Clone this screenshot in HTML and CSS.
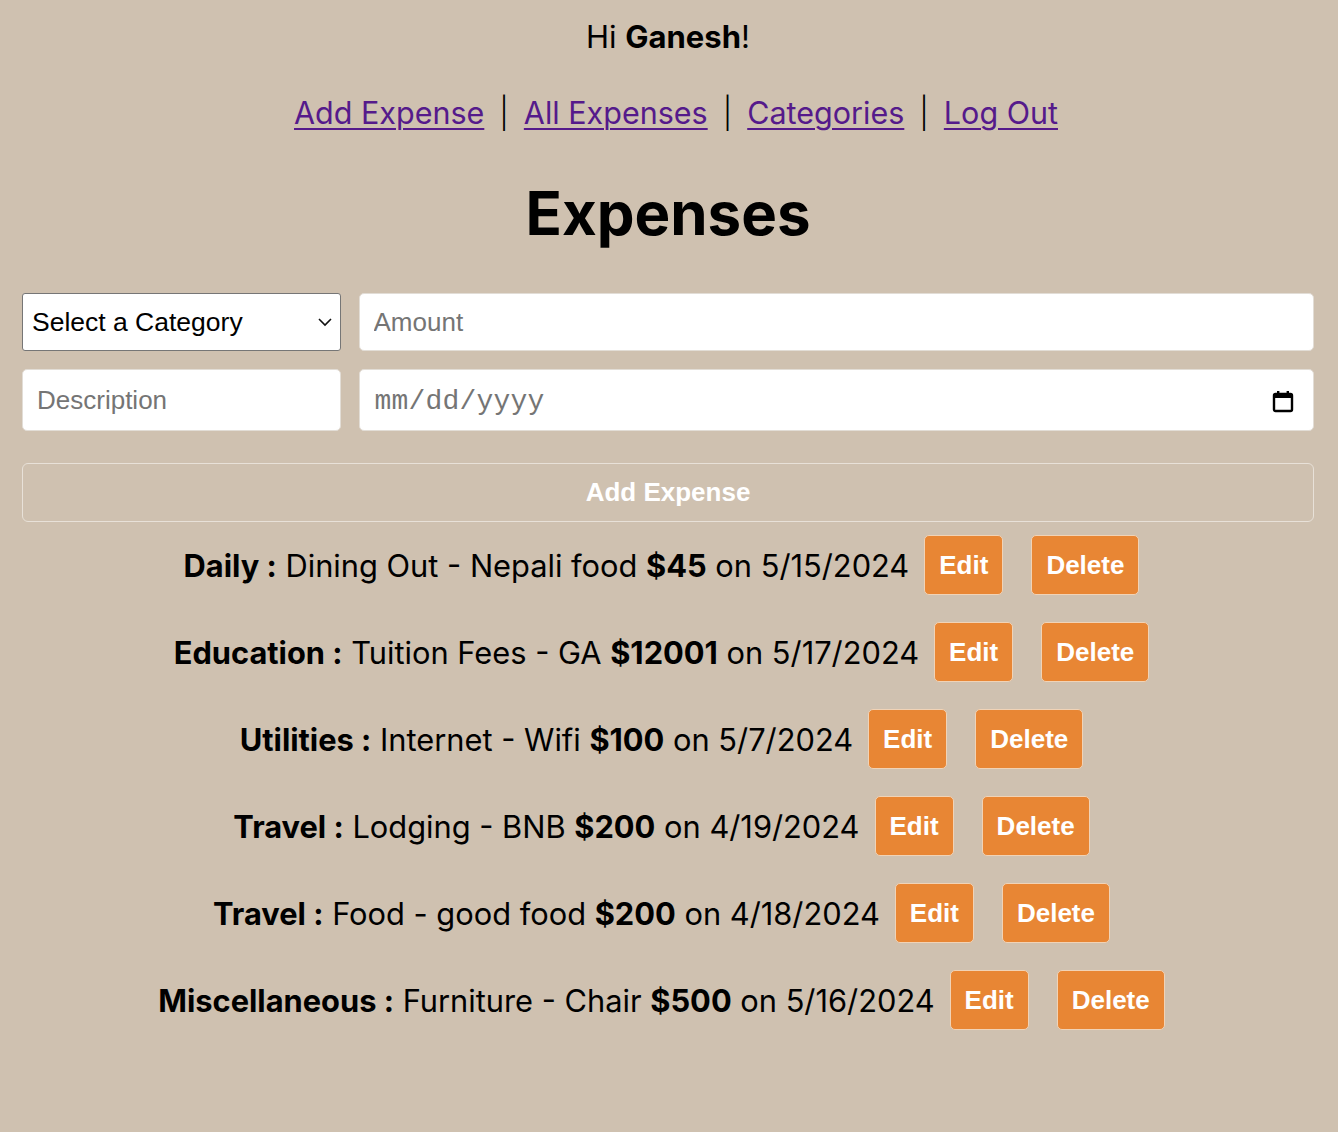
FILE: index.html
```html
<!DOCTYPE html>
<html lang="en">
<head>
<meta charset="utf-8">
<title>Expenses</title>
<link rel="stylesheet" href="styles.css">
</head>
<body>
<div class="page">
  <p class="greeting">Hi <b>Ganesh</b>!</p>
  <nav class="nav">
    <a href="#">Add Expense</a><span class="sep">|</span><a href="#">All Expenses</a><span class="sep">|</span><a href="#">Categories</a><span class="sep">|</span><a href="#">Log Out</a>
  </nav>
  <h1 class="title">Expenses</h1>
  <form class="form">
    <div class="select-wrap">
      <select class="select">
        <option>Select a Category</option>
      </select>
      <svg class="chev" width="16" height="10" viewBox="0 0 16 10"><path d="M2 2 L8 8 L14 2" fill="none" stroke="#111" stroke-width="1.6"/></svg>
    </div>
    <input class="field" type="text" placeholder="Amount">
    <input class="field tall" type="text" placeholder="Description">
    <div class="date-wrap">
      <span class="date-ph">mm/dd/yyyy</span>
      <svg class="cal" width="22" height="24" viewBox="0 0 22 24"><rect x="2" y="5" width="18" height="17" rx="1.5" fill="none" stroke="#000" stroke-width="2.4"/><rect x="2" y="5" width="18" height="4" fill="#000"/><rect x="5" y="2" width="2.4" height="4" fill="#000"/><rect x="14.6" y="2" width="2.4" height="4" fill="#000"/></svg>
    </div>
    <button type="button" class="submit">Add Expense</button>
  </form>
  <ul class="list">
    <li class="row"><span class="txt"><b>Daily :</b> Dining Out - Nepali food <b>$45</b> on 5/15/2024</span><button class="btn">Edit</button><button class="btn">Delete</button></li>
    <li class="row"><span class="txt"><b>Education :</b> Tuition Fees - GA <b>$12001</b> on 5/17/2024</span><button class="btn">Edit</button><button class="btn">Delete</button></li>
    <li class="row"><span class="txt"><b>Utilities :</b> Internet - Wifi <b>$100</b> on 5/7/2024</span><button class="btn">Edit</button><button class="btn">Delete</button></li>
    <li class="row"><span class="txt"><b>Travel :</b> Lodging - BNB <b>$200</b> on 4/19/2024</span><button class="btn">Edit</button><button class="btn">Delete</button></li>
    <li class="row"><span class="txt"><b>Travel :</b> Food - good food <b>$200</b> on 4/18/2024</span><button class="btn">Edit</button><button class="btn">Delete</button></li>
    <li class="row"><span class="txt"><b>Miscellaneous :</b> Furniture - Chair <b>$500</b> on 5/16/2024</span><button class="btn">Edit</button><button class="btn">Delete</button></li>
  </ul>
</div>
</body>
</html>
```
FILE: styles.css
```css
html, body {
  margin: 0;
  padding: 0;
  background: #cfc1b0;
}
body {
  font-family: Inter, "Liberation Sans", sans-serif;
  color: #000;
}
.page {
  padding: 0 24px 0 22px;
  text-align: center;
}
.greeting {
  margin: 0;
  padding-top: 19px;
  font-size: 31px;
  line-height: 36px;
}
.nav {
  margin-top: 38px;
  padding-left: 16px;
  font-size: 30.5px;
  line-height: 40px;
}
.nav a {
  color: #551a8b;
  text-decoration: underline;
  text-decoration-thickness: 2px;
  text-underline-offset: 4px;
}
.sep {
  margin: 0 15px;
  font-weight: 300;
}
.title {
  margin: 44px 0 0;
  font-size: 60px;
  line-height: 72px;
  font-weight: 700;
}
.form {
  margin-top: 44px;
  display: grid;
  grid-template-columns: 1fr 3fr;
  gap: 18px;
  text-align: left;
}
.select-wrap {
  position: relative;
  height: 58px;
}
.select {
  appearance: none;
  -webkit-appearance: none;
  width: 100%;
  height: 58px;
  box-sizing: border-box;
  border: 1.5px solid #767676;
  border-radius: 3px;
  background: #fff;
  font-family: "Liberation Sans", Arial, sans-serif;
  font-size: 26.5px;
  color: #000;
  padding: 0 9px;
}
.chev {
  position: absolute;
  right: 8px;
  top: 24px;
  pointer-events: none;
}
.field {
  height: 58px;
  box-sizing: border-box;
  border: 1px solid #e2ddd6;
  border-radius: 5px;
  background: #fff;
  font-family: "Liberation Sans", Arial, sans-serif;
  font-size: 26px;
  padding: 0 14px;
  width: 100%;
}
.field.tall {
  height: 62px;
}
.field::placeholder {
  color: #757575;
}
.date-wrap {
  height: 62px;
  box-sizing: border-box;
  border: 1px solid #e2ddd6;
  border-radius: 5px;
  background: #fff;
  display: flex;
  align-items: center;
  justify-content: space-between;
  padding: 2px 19px 0 15px;
}
.date-ph {
  font-family: "Liberation Mono", "DejaVu Sans Mono", monospace;
  font-size: 28px;
  color: #757575;
  letter-spacing: 0.2px;
}
.cal {
  display: block;
}
.submit {
  grid-column: 1 / -1;
  margin-top: 14px;
  height: 59px;
  background: transparent;
  border: 1px solid #e8e1d8;
  border-radius: 6px;
  color: #fff;
  font-family: "Liberation Sans", Arial, sans-serif;
  font-weight: 700;
  font-size: 26px;
}
.list {
  list-style: none;
  margin: 13px 0 0;
  padding: 0;
  display: flex;
  flex-direction: column;
  gap: 27px;
}
.row {
  display: flex;
  justify-content: center;
  align-items: center;
}
.txt {
  font-size: 30.8px;
  margin-right: 15px;
}
.btn {
  height: 60px;
  padding: 0 14px;
  background: #e88634;
  color: #fff;
  border: 1px solid #f1d3b6;
  border-radius: 5px;
  font-family: "Liberation Sans", Arial, sans-serif;
  font-weight: 700;
  font-size: 26px;
}
.btn + .btn {
  margin-left: 28px;
  margin-right: 13px;
}
```
